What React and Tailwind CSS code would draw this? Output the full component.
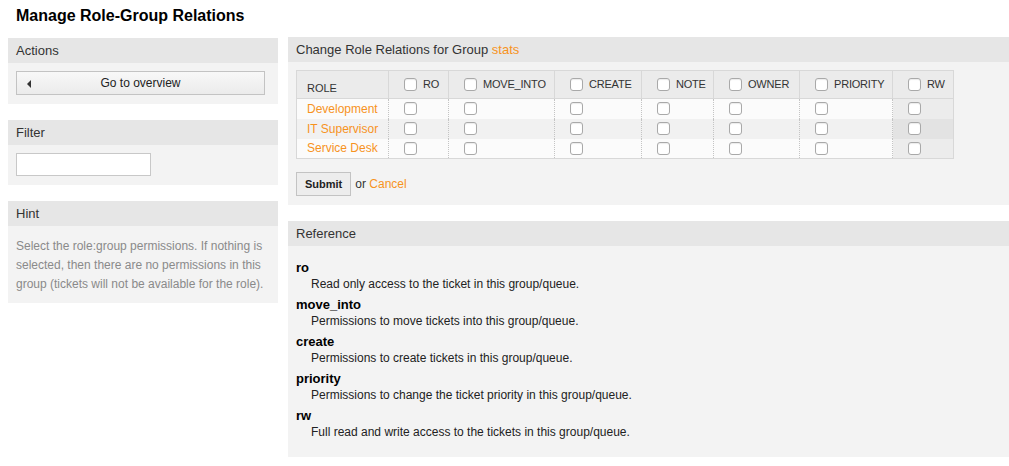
import React from "react";

const F = { fontFamily: '"Liberation Sans", Arial, Helvetica, sans-serif' };

function Box() {
  return (
    <span className="inline-block w-[13px] h-[13px] rounded-[3px] border border-[#a9a9a9] bg-white align-middle shadow-[inset_0_1px_1px_rgba(0,0,0,0.08)]" />
  );
}

function Widget({ title, children, bodyClass = "" }) {
  return (
    <div className="bg-[#f3f3f3]">
      <div className="h-[25px] bg-[#e6e6e6] flex items-center px-[8px] text-[13px] text-[#333]">{title}</div>
      <div className={bodyClass}>{children}</div>
    </div>
  );
}

const cols = [
  { k: "RO", w: 60 },
  { k: "MOVE_INTO", w: 106 },
  { k: "CREATE", w: 87 },
  { k: "NOTE", w: 72 },
  { k: "OWNER", w: 86 },
  { k: "PRIORITY", w: 93 },
  { k: "RW", w: 61 },
];

const roles = ["Development", "IT Supervisor", "Service Desk"];

const refs = [
  ["ro", "Read only access to the ticket in this group/queue."],
  ["move_into", "Permissions to move tickets into this group/queue."],
  ["create", "Permissions to create tickets in this group/queue."],
  ["priority", "Permissions to change the ticket priority in this group/queue."],
  ["rw", "Full read and write access to the tickets in this group/queue."],
];

export default function App() {
  return (
    <div style={F} className="w-[1009px] h-[466px] bg-white text-[12px] text-[#333] overflow-hidden">
      <h1 className="pl-[16px] pt-[6px] h-[37px] text-[16px] font-bold text-black leading-[20px]">
        Manage Role-Group Relations
      </h1>
      <div className="flex gap-[10px] pl-[8px]">
        {/* Left column */}
        <div className="w-[270px] flex flex-col gap-[16px] pt-[1px]">
          <Widget title="Actions" bodyClass="p-[8px] pb-[9px]">
            <div className="w-[249px] h-[24px] border border-[#c3c3c3] bg-gradient-to-b from-[#f8f8f8] to-[#ebebeb] flex items-center relative text-[12px] text-[#222]">
              <span className="absolute left-[10px] top-[8px] w-0 h-0 border-y-[4px] border-y-transparent border-r-[4px] border-r-[#333]" />
              <span className="flex-1 text-center">Go to overview</span>
            </div>
          </Widget>
          <Widget title="Filter" bodyClass="p-[8px] pb-[9px]">
            <div className="w-[135px] h-[23px] bg-white border border-[#c8c8c8]" />
          </Widget>
          <Widget title="Hint" bodyClass="px-[8px] pt-[11px] pb-[9px]">
            <p className="text-[12px] leading-[19px] text-[#8a8a8a]">
              Select the role:group permissions. If nothing is selected, then there are no permissions in this group (tickets will not be available for the role).
            </p>
          </Widget>
        </div>

        {/* Right column */}
        <div className="flex-1 flex flex-col gap-[16px]">
          <Widget
            title={
              <span>
                Change Role Relations for Group <span className="text-[#f7931e]">stats</span>
              </span>
            }
            bodyClass="px-[8px] pt-[8px] pb-[9px]"
          >
            <table className="border-collapse border border-[#d8d8d8] text-[11px]">
              <thead>
                <tr className="h-[28px] bg-[#ebebeb] text-[#333]">
                  <th className="w-[92px] text-left font-normal pl-[10px] align-bottom pb-[2px] border border-[#d8d8d8]">ROLE</th>
                  {cols.map((c) => (
                    <th
                      key={c.k}
                      style={{ width: c.w }}
                      className="text-left font-normal pl-[15px] pt-[3px] border border-[#d8d8d8]"
                    >
                      <span className="inline-flex items-center gap-[6px] tracking-[-0.2px]">
                        <Box />
                        <span>{c.k}</span>
                      </span>
                    </th>
                  ))}
                </tr>
              </thead>
              <tbody>
                {roles.map((r, i) => (
                  <tr key={r} className={i === 1 ? "h-[20px] bg-[#f1f1f1]" : "h-[20px] bg-[#fbfbfb]"}>
                    <td className="pl-[10px] text-[12px] text-[#f7931e] border-r border-dotted border-r-[#c4c4c4]">{r}</td>
                    {cols.map((c, j) => (
                      <td
                        key={c.k}
                        className={
                          j === cols.length - 1
                            ? i === 1
                              ? "pl-[15px] bg-[#e3e3e3]"
                              : "pl-[15px] bg-[#ececec]"
                            : "pl-[15px] border-r border-dotted border-r-[#c4c4c4]"
                        }
                      >
                        <span className="flex items-center">
                          <Box />
                        </span>
                      </td>
                    ))}
                  </tr>
                ))}
              </tbody>
            </table>
            <div className="mt-[13px] flex items-center gap-[4px] text-[12px]">
              <span className="h-[24px] px-[8px] border border-[#c3c3c3] bg-[#ededed] font-bold text-[#222] flex items-center text-[11px]">
                Submit
              </span>
              <span>
                or <span className="text-[#f7931e]">Cancel</span>
              </span>
            </div>
          </Widget>

          <Widget title="Reference" bodyClass="px-[8px] pt-[14px] pb-[12px]">
            <dl>
              {refs.map(([t, d]) => (
                <div key={t} className="mb-[5px]">
                  <dt className="font-bold text-black text-[13px] leading-[16px]">{t}</dt>
                  <dd className="pl-[15px] text-[#222] leading-[16px]">{d}</dd>
                </div>
              ))}
            </dl>
          </Widget>
        </div>
      </div>
    </div>
  );
}
